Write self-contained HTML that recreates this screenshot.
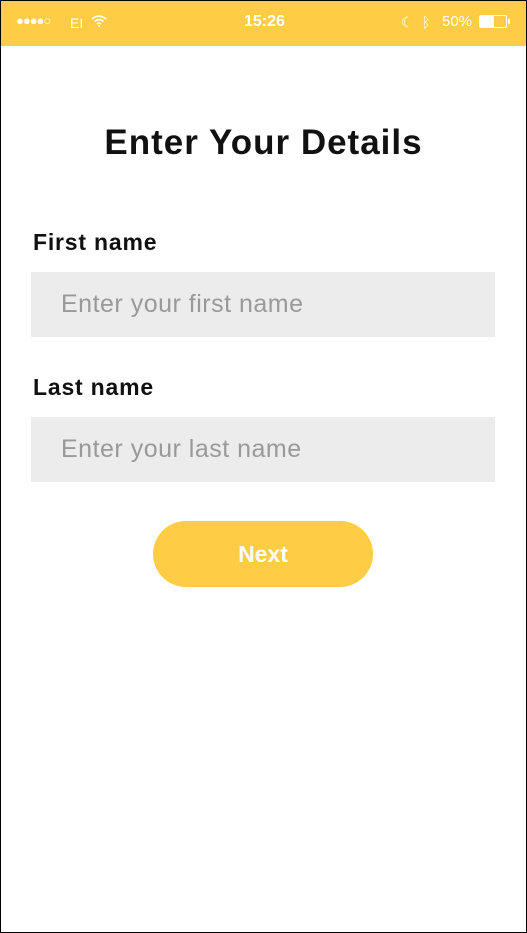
<!DOCTYPE html>
<html><head><style>
*{margin:0;padding:0;box-sizing:border-box}
html,body{width:527px;height:933px;background:#000;overflow:hidden;font-family:"Liberation Sans",sans-serif}
.scr{position:absolute;left:1px;top:1px;width:525px;height:931px;background:#fff}
.sb{position:absolute;left:0;top:0;width:525px;height:45px;background:#ffcd45;color:#fff;font-size:14px}
.abs{position:absolute}
h1{position:absolute;top:122px;width:525px;text-align:center;font-size:35px;font-weight:bold;color:#111;letter-spacing:1px}
.lbl{position:absolute;left:32px;font-size:23px;font-weight:bold;color:#111;letter-spacing:0.8px}
.inp{position:absolute;left:30px;width:464px;height:65px;background:#ececec;color:#999;font-size:25px;padding-left:30px;line-height:65px;letter-spacing:0.5px}
.btn{position:absolute;left:152px;top:520px;width:220px;height:66px;border-radius:33px;background:#ffcd45;color:#fff;font-size:23px;font-weight:bold;text-align:center;line-height:66px}
</style></head><body><div class="scr">
<div class="sb">
<div class="abs" style="left:15px;top:12px;font-size:13px;letter-spacing:-1px">●●●●○</div>
<div class="abs" style="left:69px;top:14px">EI</div>
<svg class="abs" style="left:90px;top:13px" width="16" height="13" viewBox="0 0 16 13"><path d="M1 5a10 10 0 0 1 14 0M3.5 7.5a6.5 6.5 0 0 1 9 0M6 10a3 3 0 0 1 4 0" stroke="#fff" stroke-width="1.6" fill="none"/><circle cx="8" cy="12" r="1" fill="#fff"/></svg>
<div class="abs" style="left:243px;top:12px;font-size:16px;font-weight:bold">15:26</div>
<div class="abs" style="left:400px;top:13px">☾</div>
<div class="abs" style="left:421px;top:13px">ᛒ</div>
<div class="abs" style="left:441px;top:12px;font-size:15px">50%</div>
<div class="abs" style="left:478px;top:14px;width:28px;height:13px;border:1px solid #fff;border-radius:2px"><div style="width:14px;height:11px;background:#fff"></div></div>
<div class="abs" style="left:507px;top:18px;width:2px;height:5px;background:#fff"></div>
</div>
<h1>Enter Your Details</h1>
<div class="lbl" style="top:228px">First name</div>
<div class="inp" style="top:271px">Enter your first name</div>
<div class="lbl" style="top:373px">Last name</div>
<div class="inp" style="top:416px">Enter your last name</div>
<div class="btn">Next</div>
</div></body></html>
